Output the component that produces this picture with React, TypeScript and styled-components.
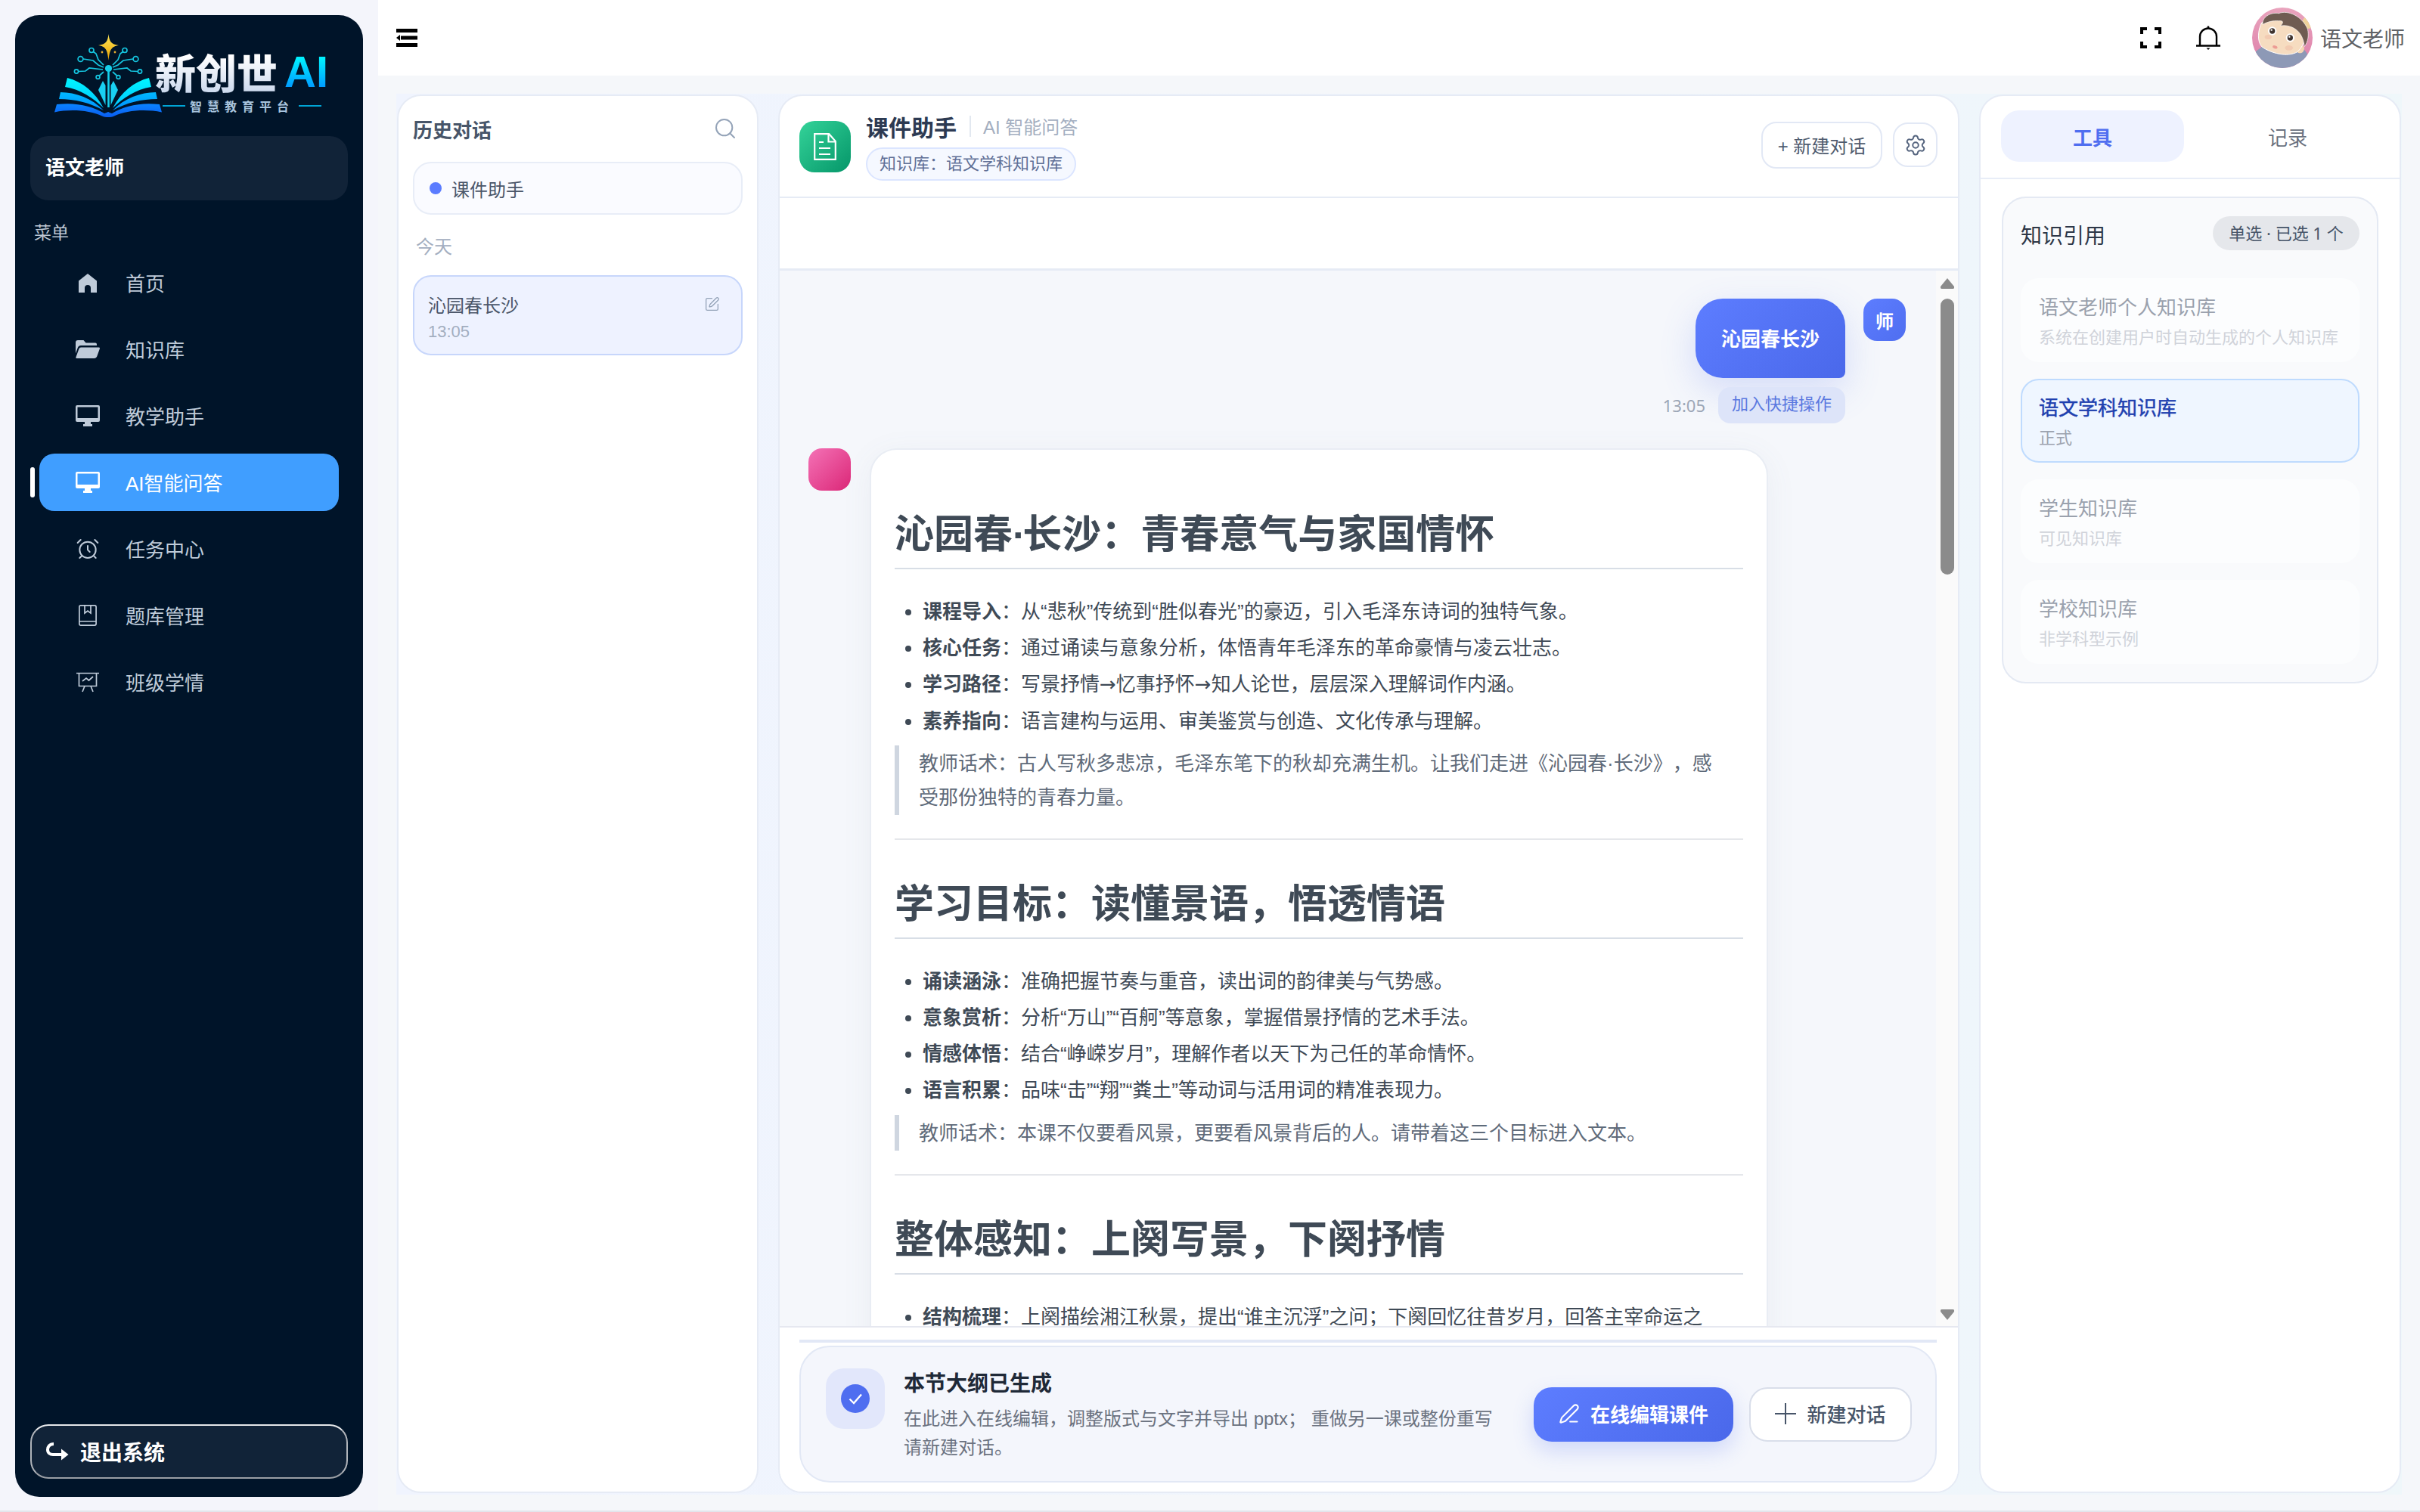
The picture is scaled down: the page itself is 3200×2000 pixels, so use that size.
import React from "react";
import styled, { createGlobalStyle } from "styled-components";
import { AlarmClock, PenLine, Search, Settings, SquarePen } from "lucide-react";

const SANS = `"Liberation Sans", "Noto Sans CJK SC", sans-serif`;
const NOTO = `"Noto Sans", "Noto Sans CJK SC", sans-serif`;

const Global = createGlobalStyle`
  html, body { margin: 0; padding: 0; width: 3200px; height: 2000px; overflow: hidden; background: #f5f7fa; }
  * { box-sizing: border-box; }
  body { font-family: ${SANS}; text-spacing-trim: space-all; }
`;

const Shell = styled.div`
  width: 3200px;
  height: 2000px;
  display: flex;
  border-bottom: 2px solid #e3e5ec;
`;

/* ---------- sidebar ---------- */
const SideColumn = styled.div`
  width: 500px;
  flex: none;
  padding: 20px;
  background: #f4f5fb;
  height: 1998px;
`;
const Sidebar = styled.aside`
  width: 460px;
  height: 1960px;
  background: #001429;
  border-radius: 32px;
  padding: 20px 20px 24px;
  display: flex;
  flex-direction: column;
`;
const LogoRow = styled.div`
  display: flex;
  height: 120px;
  margin-left: 24px;
`;
const LogoText = styled.div`
  margin-left: -9px;
  padding-top: 21px;
  display: flex;
  flex-direction: column;
`;
const LogoTitle = styled.div`
  display: flex;
  align-items: center;
  height: 67px;
  gap: 9px;
`;
const LogoCn = styled.span`
  font: 900 54px/67px "Noto Sans CJK SC", sans-serif;
  background: linear-gradient(180deg, #ffffff 20%, #cddaee 90%);
  -webkit-background-clip: text;
  background-clip: text;
  color: transparent;
`;
const LogoAi = styled.span`
  font: 700 58px/67px "Liberation Sans", sans-serif;
  background: linear-gradient(180deg, #00f0ff 25%, #0096ff 85%);
  -webkit-background-clip: text;
  background-clip: text;
  color: transparent;
`;
const LogoSub = styled.div`
  display: flex;
  align-items: center;
  margin-left: 10px;
  height: 24px;
  gap: 6px;
`;
const LogoRule = styled.i`
  display: block;
  width: 30px;
  height: 2px;
  background: #00a5d6;
`;
const LogoSubText = styled.span`
  font: 700 16px/24px "Noto Sans CJK SC", sans-serif;
  letter-spacing: 7px;
  color: #a8c4de;
  white-space: nowrap;
`;
const UserBox = styled.div`
  margin-top: 20px;
  height: 85px;
  border-radius: 24px;
  background: #112338;
  color: #fff;
  font-size: 26px;
  font-weight: 700;
  display: flex;
  align-items: center;
  padding: 0 0 7px 20px;
`;
const MenuLabel = styled.div`
  margin: 28px 0 13px 5px;
  height: 30px;
  font-size: 23px;
  line-height: 30px;
  color: #bcc6d2;
`;
const NavList = styled.nav`
  display: flex;
  flex-direction: column;
  gap: 12px;
  padding: 0 12px;
`;
const NavItem = styled.div<{ $active?: boolean }>`
  position: relative;
  height: 76px;
  border-radius: 20px;
  display: flex;
  align-items: center;
  padding-left: 48px;
  font-size: 26px;
  color: ${(p) => (p.$active ? "#ffffff" : "#bfcbd9")};
  background: ${(p) => (p.$active ? "#409eff" : "transparent")};
`;
const NavMarker = styled.i`
  position: absolute;
  left: -12px;
  top: 18px;
  width: 6px;
  height: 40px;
  border-radius: 3px;
  background: #fff;
`;
const NavIcon = styled.span`
  width: 32px;
  margin-right: 34px;
  display: flex;
  align-items: center;
  justify-content: center;
  flex: none;
`;
const NavLabel = styled.span`
  padding-bottom: 2px;
`;
const LogoutButton = styled.div`
  margin-top: auto;
  height: 72px;
  border-radius: 24px;
  border: 2px solid;
  border-color: #e6e8ea #b0b4ba #9b9fa5;
  background: #112338;
  color: #fff;
  font-size: 28px;
  font-weight: 700;
  display: flex;
  align-items: center;
  gap: 15px;
  padding-left: 19px;
`;

/* ---------- top bar ---------- */
const Main = styled.div`
  flex: 1;
  min-width: 0;
  display: flex;
  flex-direction: column;
`;
const TopBar = styled.header`
  height: 100px;
  background: #fff;
  display: flex;
  align-items: center;
  padding: 0 20px 0 24px;
  flex: none;
`;
const TopRight = styled.div`
  margin-left: auto;
  display: flex;
  align-items: center;
`;
const TopGap = styled.span<{ $w: number }>`
  width: ${(p) => p.$w}px;
`;
const TopName = styled.span`
  margin-left: 10px;
  font-size: 28px;
  color: #606266;
`;

/* ---------- workspace ---------- */
const Content = styled.div`
  flex: 1;
  min-height: 0;
  padding: 24px 24px 21px 24px;
`;
const Workspace = styled.div`
  height: 100%;
  padding: 1px 1px 2px;
  display: grid;
  grid-template-columns: 478px 1562px 558px;
  column-gap: 26px;
  background: linear-gradient(90deg, #f0f4fe 0%, #eff5fc 60%, #eff7fa 100%);
`;
const Panel = styled.section`
  min-height: 0;
  background: #fff;
  border: 2px solid #e6ebf5;
  border-radius: 32px;
  overflow: hidden;
  display: flex;
  flex-direction: column;
`;

/* history */
const HistoryBody = styled.div`
  padding: 23px 19px;
`;
const HistoryHead = styled.div`
  height: 40px;
  display: flex;
  align-items: center;
  justify-content: space-between;
  padding-right: 7px;
  font-size: 26px;
  font-weight: 700;
  color: #475569;
`;
const AgentBox = styled.div`
  margin-top: 24px;
  height: 70px;
  border: 2px solid #e8edf7;
  border-radius: 24px;
  background: #fafbff;
  display: flex;
  align-items: center;
  padding-left: 20px;
  gap: 13px;
  font-size: 24px;
  color: #4b5669;
`;
const AgentDot = styled.i`
  width: 16px;
  height: 16px;
  border-radius: 50%;
  background: #5b7cff;
`;
const DayLabel = styled.div`
  margin: 28px 0 22px 4px;
  font-size: 24px;
  line-height: 30px;
  color: #a3aec0;
`;
const HistoryItem = styled.div`
  position: relative;
  height: 106px;
  border: 2px solid #c7d6fb;
  border-radius: 24px;
  background: #eef2ff;
  padding: 22px 18px;
`;
const HistoryTitle = styled.div`
  font-size: 24px;
  line-height: 34px;
  color: #4b5669;
`;
const HistoryTime = styled.div`
  font-size: 22px;
  line-height: 34px;
  color: #a3aec0;
`;
const HistoryEdit = styled.span`
  position: absolute;
  right: 28px;
  top: 26px;
  color: #94a3b8;
  display: flex;
`;

/* chat */
const ChatHead = styled.div`
  height: 135px;
  flex: none;
  border-bottom: 2px solid #e6ebf5;
  display: flex;
  align-items: center;
  padding: 0 27px 0 26px;
`;
const BotIcon = styled.div`
  width: 68px;
  height: 68px;
  border-radius: 20px;
  background: linear-gradient(135deg, #34d399, #059669);
  display: flex;
  align-items: center;
  justify-content: center;
  flex: none;
`;
const HeadText = styled.div`
  margin-left: 20px;
  display: flex;
  flex-direction: column;
  gap: 6px;
`;
const HeadTitleRow = styled.div`
  height: 40px;
  padding-bottom: 4px;
  display: flex;
  align-items: center;
`;
const HeadTitle = styled.span`
  font-size: 30px;
  font-weight: 700;
  color: #2d3a52;
`;
const HeadDivider = styled.i`
  width: 2px;
  height: 28px;
  background: #e2e8f0;
  margin: 0 16px 0 17px;
`;
const HeadSub = styled.span`
  font-size: 24px;
  color: #a3aec0;
`;
const KbPill = styled.div`
  height: 44px;
  padding: 0 16px;
  border-radius: 22px;
  border: 2px solid #dbe5ff;
  background: #f5f8ff;
  font-size: 22px;
  line-height: 40px;
  color: #5f6f96;
  align-self: flex-start;
`;
const HeadActions = styled.div`
  margin: 0 0 4px auto;
  display: flex;
  align-items: center;
  gap: 14px;
`;
const OutlineButton = styled.div`
  height: 62px;
  width: 160px;
  border: 2px solid #e2e8f5;
  border-radius: 20px;
  background: #fff;
  display: flex;
  align-items: center;
  justify-content: center;
  font-size: 24px;
  color: #4f5b6e;
`;
const IconButton = styled.div`
  width: 59px;
  height: 59px;
  border: 2px solid #e2e8f5;
  border-radius: 20px;
  background: #fff;
  display: flex;
  align-items: center;
  justify-content: center;
  color: #56657f;
`;
const BlankBand = styled.div`
  height: 93px;
  flex: none;
  background: #fff;
  border-bottom: 3px solid #e6ebf5;
  box-sizing: content-box;
`;
const Messages = styled.div`
  flex: 1;
  min-height: 0;
  display: flex;
  background: #f5f7fb;
`;
const ScrollArea = styled.div`
  flex: 1;
  min-width: 0;
  overflow: hidden;
  padding: 37px 40px 0 38px;
`;
const Rail = styled.div`
  width: 29px;
  flex: none;
  background: #fafafa;
  padding: 10px 5px 8px 6px;
  display: flex;
  flex-direction: column;
  align-items: center;
`;
const RailThumb = styled.div`
  width: 18px;
  height: 365px;
  margin-top: 13px;
  border-radius: 9px;
  background: #8b8b8b;
`;
const RailDown = styled.div`
  margin-top: auto;
  display: flex;
`;
const UserRow = styled.div`
  display: flex;
  justify-content: flex-end;
  gap: 24px;
`;
const UserColumn = styled.div`
  display: flex;
  flex-direction: column;
  align-items: flex-end;
`;
const Bubble = styled.div`
  height: 105px;
  padding: 0 34px 2px;
  border-radius: 36px 36px 8px 36px;
  background: linear-gradient(135deg, #5d7dff, #4a68ea);
  color: #fff;
  font-size: 26px;
  font-weight: 700;
  display: flex;
  align-items: center;
  box-shadow: 0 16px 48px rgba(79, 110, 240, 0.2);
`;
const BubbleMeta = styled.div`
  margin-top: 12px;
  display: flex;
  align-items: center;
  gap: 17px;
`;
const MetaTime = styled.span`
  font-family: ${NOTO};
  font-size: 22px;
  color: #9ca6b6;
`;
const MetaPill = styled.span`
  height: 48px;
  padding: 0 18px;
  border-radius: 16px;
  background: #dde4f9;
  color: #5a78e0;
  font-size: 22px;
  line-height: 46px;
`;
const TeacherBadge = styled.div`
  width: 56px;
  height: 56px;
  border-radius: 18px;
  background: linear-gradient(135deg, #5d7dff, #4f6ef0);
  color: #fff;
  font-size: 24px;
  font-weight: 700;
  display: flex;
  align-items: center;
  justify-content: center;
  flex: none;
`;
const AiRow = styled.div`
  margin-top: 33px;
  display: flex;
  gap: 25px;
  align-items: flex-start;
`;
const AiBadge = styled.div`
  width: 56px;
  height: 56px;
  border-radius: 18px;
  background: linear-gradient(135deg, #f472b6, #db2777);
  flex: none;
`;
const AnswerCard = styled.article`
  width: 1188px;
  flex: none;
  background: #fff;
  border: 2px solid #e9edf4;
  border-radius: 36px;
  padding: 76px 31px 40px;
  box-shadow: 0 8px 40px rgba(100, 116, 139, 0.07);
  color: #3f4a56;
`;
const Heading = styled.h1`
  margin: 0;
  font-size: 52px;
  font-weight: 700;
  line-height: 72px;
  padding-bottom: 8px;
  border-bottom: 2px solid #d8dee6;
  color: #3f4a56;
`;
const Points = styled.ul`
  margin: 32px 0 8px;
  padding: 0 0 0 37px;
`;
const Point = styled.li`
  font-size: 26px;
  line-height: 48.2px;
  color: #3f4a56;
`;
const ThinArrow = styled.span`
  font-family: "DejaVu Sans", sans-serif;
`;
const MiddleDot = styled.span`
  letter-spacing: -0.08em;
`;
const Quote = styled.blockquote`
  margin: 0;
  padding: 2px 26px 0 26px;
  border-left: 6px solid #cfd6e0;
  font-size: 26px;
  line-height: 45px;
  color: #5f6b7a;
`;
const Rule = styled.hr`
  margin: 31px 0 49px;
  border: 0;
  height: 2px;
  background: #e5e7eb;
`;

/* chat footer */
const ChatFoot = styled.div`
  flex: none;
  height: 219px;
  border-top: 2px solid #e6e8f0;
  background: #fff;
  padding: 16px 28px 0 26px;
`;
const FootBand = styled.div`
  height: 4px;
  background: #e2e8f6;
  margin-bottom: 4px;
`;
const DoneCard = styled.div`
  height: 181px;
  border: 2px solid #e2e8f5;
  border-radius: 40px;
  background: #f4f6fc;
  padding: 0 31px 0 33px;
  display: flex;
  align-items: center;
`;
const DoneIcon = styled.div`
  width: 78px;
  height: 80px;
  margin-top: -41px;
  border-radius: 24px;
  background: #e2e7fb;
  flex: none;
  display: flex;
  align-items: center;
  justify-content: center;
`;
const DoneText = styled.div`
  margin-left: 25px;
  padding-top: 3px;
  width: 790px;
`;
const DoneTitle = styled.div`
  font-size: 28px;
  font-weight: 700;
  line-height: 40px;
  color: #1f2937;
  margin-bottom: 7px;
`;
const DoneDesc = styled.div`
  font-size: 24px;
  line-height: 37.5px;
  color: #6b7280;
`;
const DoneActions = styled.div`
  margin-left: auto;
  display: flex;
  gap: 21px;
`;
const PrimaryAction = styled.div`
  height: 72px;
  width: 264px;
  border-radius: 24px;
  padding-bottom: 2px;
  background: linear-gradient(135deg, #5d7dff, #4a68ea);
  box-shadow: 0 12px 28px rgba(79, 110, 240, 0.22);
  color: #fff;
  font-size: 26px;
  font-weight: 700;
  display: flex;
  align-items: center;
  justify-content: center;
  gap: 14px;
`;
const SecondaryAction = styled.div`
  height: 72px;
  width: 215px;
  border-radius: 24px;
  padding-bottom: 2px;
  background: #fff;
  border: 2px solid #d9deea;
  color: #475569;
  font-size: 26px;
  font-weight: 500;
  display: flex;
  align-items: center;
  justify-content: center;
  gap: 14px;
`;

/* right panel */
const Tabs = styled.div`
  flex: none;
  height: 110px;
  padding: 19px 27px 0;
  border-bottom: 2px solid #e8edf7;
  display: flex;
  gap: 16px;
`;
const Tab = styled.div<{ $active?: boolean }>`
  width: 242px;
  height: 68px;
  border-radius: 24px;
  background: ${(p) => (p.$active ? "#eef2ff" : "transparent")};
  color: ${(p) => (p.$active ? "#4f6ef0" : "#6b7280")};
  font-size: 26px;
  font-weight: ${(p) => (p.$active ? 700 : 400)};
  display: flex;
  align-items: center;
  justify-content: center;
`;
const ToolBody = styled.div`
  padding: 23px 28px;
`;
const KnowledgeCard = styled.div`
  border: 2px solid #e4e9f3;
  border-radius: 32px;
  background: #f9fafc;
  padding: 24px 23px;
`;
const KnowledgeHead = styled.div`
  height: 45px;
  display: flex;
  align-items: center;
  justify-content: space-between;
  margin-bottom: 37px;
`;
const KnowledgeTitle = styled.span`
  font-size: 28px;
  color: #2d3748;
  padding-top: 3px;
`;
const KnowledgeBadge = styled.span`
  height: 45px;
  width: 194px;
  border-radius: 23px;
  background: #e5e7eb;
  color: #475569;
  font-family: ${NOTO};
  font-size: 22px;
  line-height: 45px;
  text-align: center;
  white-space: nowrap;
`;
const KnowledgeList = styled.div`
  display: flex;
  flex-direction: column;
  gap: 22px;
`;
const KnowledgeItem = styled.div<{ $selected?: boolean }>`
  height: 111px;
  border-radius: 24px;
  padding: 18px 22px;
  border: 2px solid ${(p) => (p.$selected ? "#bfdbfe" : "transparent")};
  background: ${(p) => (p.$selected ? "#eff6ff" : "#fcfdfe")};
`;
const KnowledgeName = styled.div<{ $selected?: boolean }>`
  font-size: 26px;
  line-height: 38px;
  color: ${(p) => (p.$selected ? "#1e40af" : "#9aa1ad")};
  -webkit-text-stroke: ${(p) => (p.$selected ? "0.5px #1e40af" : "0")};
`;
const KnowledgeNote = styled.div<{ $selected?: boolean }>`
  margin-top: 6px;
  font-size: 22px;
  line-height: 30px;
  white-space: nowrap;
  color: ${(p) => (p.$selected ? "#9ca3af" : "#d0d3da")};
`;

/* ---------- drawings ---------- */
const NavFill = "currentColor";

const HomeIcon = () => (
  <svg width="24" height="25" viewBox="0 0 24 25"><path fill={NavFill} d="M12 0 L24 9.5 V25 H16 V19 a4 4 0 0 0-8 0 V25 H0 V9.5 Z" /></svg>
);
const FolderIcon = () => (
  <svg width="32" height="24" viewBox="0 0 32 24">
    <path fill={NavFill} d="M0 3a3 3 0 0 1 3-3h7.5l3 3.5H26a2 2 0 0 1 2 2V7H7a4.5 4.5 0 0 0-4.2 3L0 17.5Z" />
    <path fill={NavFill} d="M7.2 9.5h23.3a1.4 1.4 0 0 1 1.3 1.9l-3.6 10.2a3.5 3.5 0 0 1-3.3 2.4H1.5a1.2 1.2 0 0 1-1.1-1.6l4-11a2.9 2.9 0 0 1 2.8-1.9Z" />
  </svg>
);
const MonitorIcon = () => (
  <svg width="32" height="28" viewBox="0 0 32 28">
    <path fillRule="evenodd" fill={NavFill} d="M2 0h28a2 2 0 0 1 2 2v18a2 2 0 0 1-2 2H2a2 2 0 0 1-2-2V2a2 2 0 0 1 2-2Zm.5 2.5v14.5h27V2.5Z" />
    <path fill={NavFill} d="M12 22h8v3h2v3H10v-3h2Z" />
  </svg>
);
const BookIcon = () => (
  <svg width="24" height="28" viewBox="0 0 24 28" fill="none" stroke="currentColor" strokeWidth="1.7">
    <rect x="0.9" y="0.9" width="22.2" height="26.2" rx="2" />
    <path d="M1 22h22M8 1v10l4-3 4 3V1" />
  </svg>
);
const ChartIcon = () => (
  <svg width="30" height="27" viewBox="0 0 30 27" fill="none" stroke="currentColor" strokeWidth="1.7">
    <path d="M0 1.5h30M3.5 1.5v17h23v-17M8 12l5-4 3.5 3L22 6M11 18.5 8 26M19 18.5 22 26" />
  </svg>
);
const LogoutIcon = () => (
  <svg width="30" height="24" viewBox="0 0 30 24">
    <path fill="none" stroke="#fff" strokeWidth="4" d="M10 2C4.5 2 2 6 2 9.5 2 14 5.5 16 9 16h12" />
    <path fill="#fff" d="M20 8.5 29.5 16 20 23.5Z" />
  </svg>
);
const FoldIcon = () => (
  <svg width="28" height="24" viewBox="0 0 28 24" fill="#000">
    <rect x="0" y="0" width="28" height="5" />
    <rect x="6" y="9.5" width="22" height="5" />
    <path d="M0 12 5 8v8Z" />
    <rect x="0" y="19" width="28" height="5" />
  </svg>
);
const FullscreenIcon = () => (
  <svg width="28" height="28" viewBox="0 0 28 28" fill="none" stroke="#000" strokeWidth="4">
    <path d="M2 9V2h7M19 2h7v7M26 19v7h-7M9 26H2v-7" />
  </svg>
);
const BellIcon = () => (
  <svg width="32" height="33" viewBox="0 0 32 33" fill="none" stroke="#000" strokeWidth="2">
    <path d="M5 26V14.5a11 11 0 0 1 22 0V26M0 26.5h32" strokeWidth="2.4" />
    <path d="M16 0.5v3" strokeWidth="2.5" />
    <path d="M13.5 29.5h5L16 32Z" fill="#000" stroke="none" />
  </svg>
);
const DocIcon = () => (
  <svg width="30" height="36" viewBox="0 0 30 36" fill="none" stroke="#fff" strokeWidth="2.2">
    <path d="M1.2 1.2h19l8.6 9.6v24H1.2Z" />
    <path d="M19.5 1.5v10h9" />
    <path d="M7 12h6M7 20h15M7 28h15" />
  </svg>
);
const PlusIcon = () => (
  <svg width="28" height="28" viewBox="0 0 28 28" stroke="#475569" strokeWidth="2"><path d="M14 0v28M0 14h28" /></svg>
);
const CheckDot = () => (
  <svg width="38" height="38" viewBox="0 0 38 38">
    <circle cx="19" cy="19" r="19" fill="#4f6ef0" />
    <path d="M11.5 19.5 17 25 27 13.5" fill="none" stroke="#fff" strokeWidth="2.4" />
  </svg>
);
const ArrowUp = () => <svg width="18" height="14" viewBox="0 0 18 14"><path fill="#8b8b8b" d="M9 0 18 11a2 2 0 0 1-1.5 3H1.5A2 2 0 0 1 0 11Z" /></svg>;
const ArrowDown = () => <svg width="18" height="14" viewBox="0 0 18 14"><path fill="#8b8b8b" d="M9 14 18 3a2 2 0 0 0-1.5-3H1.5A2 2 0 0 0 0 3Z" /></svg>;

const mirror = "matrix(-1 0 0 1 158 0)";
const LogoMark = () => (
  <svg width="150" height="120" viewBox="0 0 150 120" style={{ flex: "none" }}>
    <defs>
      <linearGradient id="pgA" x1="0" y1="0" x2="0" y2="1"><stop offset="0" stopColor="#00f6ff" /><stop offset="1" stopColor="#00c4ff" /></linearGradient>
      <linearGradient id="pgB" x1="0" y1="0" x2="0" y2="1"><stop offset="0" stopColor="#00b8ff" /><stop offset="1" stopColor="#0090ff" /></linearGradient>
      <linearGradient id="pgC" x1="0" y1="0" x2="0" y2="1"><stop offset="0" stopColor="#0a84ff" /><stop offset="1" stopColor="#0a5cf0" /></linearGradient>
      <linearGradient id="star" x1="0" y1="0" x2="0" y2="1"><stop offset="0" stopColor="#ffe85a" /><stop offset="1" stopColor="#e8a000" /></linearGradient>
    </defs>
    <path fill="url(#star)" d="M79.5 5 C80.5 15 83 18.5 93 20 C83.5 21.5 81 25 79.5 40 C78 25 75.5 21.5 66 20 C76 18.5 78.5 15 79.5 5Z" />
    <circle cx="71" cy="29" r="1.4" fill="#e8b030" />
    <circle cx="88" cy="29" r="1.4" fill="#e8b030" />
    {[undefined, mirror].map((t, i) => (
      <g key={i} transform={t}>
        <g fill="none" stroke="#15c6e0" strokeWidth="1.7">
          <circle cx="57" cy="26.5" r="3" />
          <path d="M59.5 28.5 63 31 66 39 73 46" />
          <circle cx="42.5" cy="38" r="3.4" />
          <path d="M46 38 59 40 66 46 73 49" />
          <circle cx="37" cy="54.5" r="2.6" />
          <path d="M39.7 54.5 49 54 54 50 72 52" />
          <circle cx="65.5" cy="62" r="2.4" />
          <path d="M67.5 60 73 55" />
        </g>
        <path fill="#19d0f2" d="M72 67 66 79 75.5 99 75.5 73Z" />
        <path fill="url(#pgA)" d="M25 63 C45 68 62 82 73 103 C60 90 42 78 22 75Z" />
        <path fill="url(#pgB)" d="M16 82 C36 82 58 90 73 106 C55 96 35 91 14 91Z" />
        <path fill="url(#pgC)" d="M11 98 C36 95 58 100 74 110 L79.5 108 L79.5 115 C76 115 73 114.5 71 113.5 C55 106 30 104 8 108.5Z" />
      </g>
    ))}
    <circle cx="79.5" cy="50.5" r="4.6" fill="#15cfea" />
    <rect x="78.2" y="52" width="2.6" height="50" fill="#15cfea" />
  </svg>
);

const AvatarArt = () => (
  <svg width="80" height="80" viewBox="24 15 240 240" style={{ flex: "none" }}>
    <defs>
      <clipPath id="avc"><circle cx="144" cy="135" r="120" /></clipPath>
      <linearGradient id="avbg" x1="0" y1="0" x2="0" y2="1"><stop offset="0" stopColor="#e9a4bd" /><stop offset="1" stopColor="#dd7ea9" /></linearGradient>
    </defs>
    <g clipPath="url(#avc)">
      <rect x="24" y="15" width="240" height="240" fill="url(#avbg)" />
      <ellipse cx="245" cy="75" rx="22" ry="24" fill="#eed39a" />
      <path d="M38 190 70 165 150 190 228 178 244 200 230 260H50Z" fill="#8d99b6" />
      <path d="M205 165 C228 158 238 175 225 192 C216 200 205 195 200 188Z" fill="#f5d6b4" />
      <path d="M62 75 C45 110 45 150 62 170 C95 195 165 215 205 190 C235 160 240 125 230 95 L140 45Z" fill="#f6dcc0" stroke="#fff" strokeWidth="3" />
      <path d="M66 82 C62 55 95 32 130 38 C165 24 222 48 244 100 C250 125 246 150 232 170 C228 145 222 125 205 108 C188 92 160 82 136 88 C150 74 148 66 130 68 C105 66 85 72 66 82Z" fill="#6f5c52" stroke="#fff" strokeWidth="2" />
      <circle cx="104" cy="108" r="17" fill="#fff" />
      <circle cx="104" cy="108" r="11" fill="#40342f" />
      <circle cx="101" cy="104" r="3.5" fill="#fff" />
      <circle cx="175" cy="135" r="17" fill="#fff" />
      <circle cx="175" cy="135" r="11" fill="#40342f" />
      <circle cx="172" cy="131" r="3.5" fill="#fff" />
      <ellipse cx="88" cy="132" rx="14" ry="9" fill="#f0c0a8" opacity="0.6" />
      <ellipse cx="170" cy="175" rx="16" ry="10" fill="#f0c0a8" opacity="0.6" />
      <ellipse cx="115" cy="172" rx="10" ry="6" fill="#ec9c94" transform="rotate(18 115 172)" />
    </g>
  </svg>
);

const navItems: { label: string; icon: React.ReactNode; active?: boolean }[] = [
  { label: "首页", icon: <HomeIcon /> },
  { label: "知识库", icon: <FolderIcon /> },
  { label: "教学助手", icon: <MonitorIcon /> },
  { label: "AI智能问答", icon: <MonitorIcon />, active: true },
  { label: "任务中心", icon: <AlarmClock size={34} strokeWidth={1.5} /> },
  { label: "题库管理", icon: <BookIcon /> },
  { label: "班级学情", icon: <ChartIcon /> },
];

const knowledge = [
  { name: "语文老师个人知识库", note: "系统在创建用户时自动生成的个人知识库" },
  { name: "语文学科知识库", note: "正式", selected: true },
  { name: "学生知识库", note: "可见知识库" },
  { name: "学校知识库", note: "非学科型示例" },
];

const sections = [
  {
    title: "沁园春·长沙：青春意气与家国情怀",
    points: [
      ["课程导入", "从“悲秋”传统到“胜似春光”的豪迈，引入毛泽东诗词的独特气象。"],
      ["核心任务", "通过诵读与意象分析，体悟青年毛泽东的革命豪情与凌云壮志。"],
      ["学习路径", "写景抒情→忆事抒怀→知人论世，层层深入理解词作内涵。"],
      ["素养指向", "语言建构与运用、审美鉴赏与创造、文化传承与理解。"],
    ],
    quote: "教师话术：古人写秋多悲凉，毛泽东笔下的秋却充满生机。让我们走进《沁园春·长沙》，感受那份独特的青春力量。",
  },
  {
    title: "学习目标：读懂景语，悟透情语",
    points: [
      ["诵读涵泳", "准确把握节奏与重音，读出词的韵律美与气势感。"],
      ["意象赏析", "分析“万山”“百舸”等意象，掌握借景抒情的艺术手法。"],
      ["情感体悟", "结合“峥嵘岁月”，理解作者以天下为己任的革命情怀。"],
      ["语言积累", "品味“击”“翔”“粪土”等动词与活用词的精准表现力。"],
    ],
    quote: "教师话术：本课不仅要看风景，更要看风景背后的人。请带着这三个目标进入文本。",
  },
  {
    title: "整体感知：上阕写景，下阕抒情",
    points: [["结构梳理", "上阕描绘湘江秋景，提出“谁主沉浮”之问；下阕回忆往昔岁月，回答主宰命运之"]],
  },
];

const withArrows = (text: string) =>
  text.split("→").map((part, i) => (
    <React.Fragment key={i}>
      {i > 0 && <ThinArrow>→</ThinArrow>}
      {part}
    </React.Fragment>
  ));

const withDots = (text: string) =>
  text.split("·").map((part, i) => (
    <React.Fragment key={i}>
      {i > 0 && <MiddleDot>·</MiddleDot>}
      {part}
    </React.Fragment>
  ));

export default function App() {
  return (
    <>
      <Global />
      <Shell>
        <SideColumn>
          <Sidebar>
            <LogoRow>
              <LogoMark />
              <LogoText>
                <LogoTitle>
                  <LogoCn>新创世</LogoCn>
                  <LogoAi>AI</LogoAi>
                </LogoTitle>
                <LogoSub>
                  <LogoRule />
                  <LogoSubText>智慧教育平台</LogoSubText>
                  <LogoRule />
                </LogoSub>
              </LogoText>
            </LogoRow>
            <UserBox>语文老师</UserBox>
            <MenuLabel>菜单</MenuLabel>
            <NavList>
              {navItems.map((n) => (
                <NavItem key={n.label} $active={n.active}>
                  {n.active && <NavMarker />}
                  <NavIcon>{n.icon}</NavIcon>
                  <NavLabel>{n.label}</NavLabel>
                </NavItem>
              ))}
            </NavList>
            <LogoutButton>
              <LogoutIcon />
              退出系统
            </LogoutButton>
          </Sidebar>
        </SideColumn>
        <Main>
          <TopBar>
            <FoldIcon />
            <TopRight>
              <FullscreenIcon />
              <TopGap $w={46} />
              <BellIcon />
              <TopGap $w={42} />
              <AvatarArt />
              <TopName>语文老师</TopName>
            </TopRight>
          </TopBar>
          <Content>
            <Workspace>
              <Panel>
                <HistoryBody>
                  <HistoryHead>
                    历史对话
                    <Search size={32} strokeWidth={1.5} color="#94a3b8" />
                  </HistoryHead>
                  <AgentBox>
                    <AgentDot />
                    课件助手
                  </AgentBox>
                  <DayLabel>今天</DayLabel>
                  <HistoryItem>
                    <HistoryTitle>沁园春长沙</HistoryTitle>
                    <HistoryTime>13:05</HistoryTime>
                    <HistoryEdit>
                      <SquarePen size={21} strokeWidth={1.5} />
                    </HistoryEdit>
                  </HistoryItem>
                </HistoryBody>
              </Panel>
              <Panel>
                <ChatHead>
                  <BotIcon>
                    <DocIcon />
                  </BotIcon>
                  <HeadText>
                    <HeadTitleRow>
                      <HeadTitle>课件助手</HeadTitle>
                      <HeadDivider />
                      <HeadSub>AI 智能问答</HeadSub>
                    </HeadTitleRow>
                    <KbPill>知识库：语文学科知识库</KbPill>
                  </HeadText>
                  <HeadActions>
                    <OutlineButton>+ 新建对话</OutlineButton>
                    <IconButton>
                      <Settings size={30} strokeWidth={1.6} />
                    </IconButton>
                  </HeadActions>
                </ChatHead>
                <BlankBand />
                <Messages>
                  <ScrollArea>
                    <UserRow>
                      <UserColumn>
                        <Bubble>沁园春长沙</Bubble>
                        <BubbleMeta>
                          <MetaTime>13:05</MetaTime>
                          <MetaPill>加入快捷操作</MetaPill>
                        </BubbleMeta>
                      </UserColumn>
                      <TeacherBadge>师</TeacherBadge>
                    </UserRow>
                    <AiRow>
                      <AiBadge />
                      <AnswerCard>
                        {sections.map((s, i) => (
                          <React.Fragment key={s.title}>
                            <Heading>{withDots(s.title)}</Heading>
                            <Points>
                              {s.points.map(([k, v]) => (
                                <Point key={k}>
                                  <strong>{k}</strong>：{withArrows(v)}
                                </Point>
                              ))}
                            </Points>
                            {s.quote && <Quote>{s.quote}</Quote>}
                            {i < 2 && <Rule />}
                          </React.Fragment>
                        ))}
                      </AnswerCard>
                    </AiRow>
                  </ScrollArea>
                  <Rail>
                    <ArrowUp />
                    <RailThumb />
                    <RailDown>
                      <ArrowDown />
                    </RailDown>
                  </Rail>
                </Messages>
                <ChatFoot>
                  <FootBand />
                  <DoneCard>
                    <DoneIcon>
                      <CheckDot />
                    </DoneIcon>
                    <DoneText>
                      <DoneTitle>本节大纲已生成</DoneTitle>
                      <DoneDesc>在此进入在线编辑，调整版式与文字并导出 pptx； 重做另一课或整份重写请新建对话。</DoneDesc>
                    </DoneText>
                    <DoneActions>
                      <PrimaryAction>
                        <PenLine size={28} strokeWidth={1.8} />
                        在线编辑课件
                      </PrimaryAction>
                      <SecondaryAction>
                        <PlusIcon />
                        新建对话
                      </SecondaryAction>
                    </DoneActions>
                  </DoneCard>
                </ChatFoot>
              </Panel>
              <Panel>
                <Tabs>
                  <Tab $active>工具</Tab>
                  <Tab>记录</Tab>
                </Tabs>
                <ToolBody>
                  <KnowledgeCard>
                    <KnowledgeHead>
                      <KnowledgeTitle>知识引用</KnowledgeTitle>
                      <KnowledgeBadge>单选 · 已选 1 个</KnowledgeBadge>
                    </KnowledgeHead>
                    <KnowledgeList>
                      {knowledge.map((k) => (
                        <KnowledgeItem key={k.name} $selected={k.selected}>
                          <KnowledgeName $selected={k.selected}>{k.name}</KnowledgeName>
                          <KnowledgeNote $selected={k.selected}>{k.note}</KnowledgeNote>
                        </KnowledgeItem>
                      ))}
                    </KnowledgeList>
                  </KnowledgeCard>
                </ToolBody>
              </Panel>
            </Workspace>
          </Content>
        </Main>
      </Shell>
    </>
  );
}
